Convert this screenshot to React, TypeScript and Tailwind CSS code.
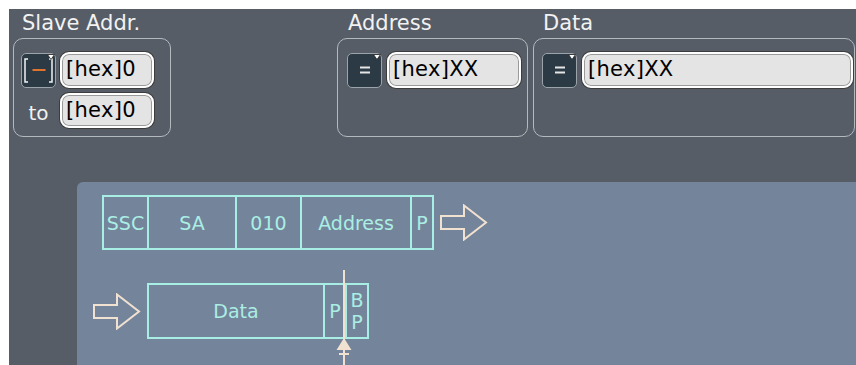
import type { ReactNode } from "react";

const sans = { fontFamily: '"DejaVu Sans", Verdana, sans-serif' };

function Corner() {
  return (
    <svg width="8" height="6" viewBox="0 0 8 6" className="absolute top-0 right-0">
      <path d="M0.5 0.5 H7.5 L4 5.5 Z" fill="#ffffff" stroke="#222" strokeWidth="0.8" />
    </svg>
  );
}

function OpButton({ kind }: { kind: "range" | "eq" }) {
  return (
    <div className="relative w-[35px] h-[35px] shrink-0 rounded-[5px] border border-[#9ca3aa] bg-[#2c3a45] flex items-center justify-center">
      {kind === "eq" ? (
        <svg width="12" height="10" viewBox="0 0 12 10">
          <rect x="1" y="1.5" width="10" height="2" fill="#e6e6e6" />
          <rect x="1" y="6.5" width="10" height="2" fill="#e6e6e6" />
        </svg>
      ) : (
        <svg width="33" height="33" viewBox="0 0 33 33">
          <path d="M6 5 H3 V28 H6" fill="none" stroke="#f2f2f2" strokeWidth="1.5" />
          <path d="M27 5 H30 V28 H27" fill="none" stroke="#f2f2f2" strokeWidth="1.5" />
          <path d="M10.5 16 H23.5" stroke="#e0742c" strokeWidth="2" />
        </svg>
      )}
      <Corner />
    </div>
  );
}

function HexInput({ value, width, height = 36 }: { value: string; width: number; height?: number }) {
  return (
    <div
      className="flex items-center rounded-[9px] border-2 border-white bg-[#e4e4e4] pl-[4px] text-[21px] tracking-[0.3px] text-black shadow-[0_0_0_1px_#3c3c3c,inset_0_0_0_1px_#9a9a9a]"
      style={{ ...sans, width, height }}
    >
      {value}
    </div>
  );
}

function Group({ label, width, labelPad, children }: { label: string; width: number; labelPad: number; children: ReactNode }) {
  return (
    <div style={{ width }} className="shrink-0">
      <div className="h-[29px] pt-[1px] text-[21px] leading-[26px] text-[#f2f2f2]" style={{ ...sans, paddingLeft: labelPad }}>
        {label}
      </div>
      <div className="h-[99px] rounded-[10px] border border-[#b4b9be] pt-[13px]">{children}</div>
    </div>
  );
}

function Cell({ w, children, last }: { w: number; children: ReactNode; last?: boolean }) {
  return (
    <div
      className={`flex flex-col items-center justify-center leading-[22px] ${last ? "" : "border-r-2 border-[#a8eee4]"}`}
      style={{ width: w }}
    >
      {children}
    </div>
  );
}

function Arrow() {
  return (
    <svg width="48" height="37" viewBox="0 0 48 37" className="shrink-0">
      <path d="M1 12 H24 V1.5 L46 18.5 L24 35.5 V25 H1 Z" fill="none" stroke="#f1e1d0" strokeWidth="2" />
    </svg>
  );
}

export default function App() {
  return (
    <div className="w-[856px] h-[365px] overflow-hidden bg-white pl-[9px] pt-[9px]">
      <div className="h-full bg-[#565d66] flex flex-col">
        <div className="flex items-start">
          <div className="ml-[4px]">
            <Group label="Slave Addr." width={158} labelPad={9}>
              <div className="grid grid-cols-[35px_94px] gap-x-[4px] gap-y-[5px] pl-[7px] items-center">
                <OpButton kind="range" />
                <HexInput value="[hex]0" width={94} />
                <div className="text-[20px] text-[#f2f2f2] text-center pt-[4px]" style={sans}>
                  to
                </div>
                <HexInput value="[hex]0" width={94} height={35} />
              </div>
            </Group>
          </div>
          <div className="ml-[166px]">
            <Group label="Address" width={191} labelPad={11}>
              <div className="flex items-center gap-[5px] pl-[9px]">
                <OpButton kind="eq" />
                <HexInput value="[hex]XX" width={134} />
              </div>
            </Group>
          </div>
          <div className="ml-[5px]">
            <Group label="Data" width={322} labelPad={10}>
              <div className="flex items-center gap-[5px] pl-[8px]">
                <OpButton kind="eq" />
                <HexInput value="[hex]XX" width={271} />
              </div>
            </Group>
          </div>
        </div>

        <div
          className="relative mt-[45px] ml-[68px] flex-1 rounded-tl-[6px] bg-[#74849b] pl-[16px] pt-[13px] text-[19px] text-[#aaeee4]"
          style={sans}
        >
          <div className="ml-[9px] flex items-center gap-[6px]">
            <div className="flex h-[55px] border-y-2 border-l-2 border-[#a8eee4]">
              <Cell w={45}>SSC</Cell>
              <Cell w={88}>SA</Cell>
              <Cell w={65}>010</Cell>
              <Cell w={110}>Address</Cell>
              <Cell w={22}>P</Cell>
            </div>
            <Arrow />
          </div>

          <div className="mt-[33px] flex items-center gap-[6px]">
            <Arrow />
            <div className="flex h-[56px] border-2 border-[#a8eee4]">
              <Cell w={176}>Data</Cell>
              <Cell w={22}>P</Cell>
              <Cell w={20} last>
                <span>B</span>
                <span>P</span>
              </Cell>
            </div>
          </div>

          <svg width="20" height="100" viewBox="0 0 20 100" className="absolute left-[257px] top-[88px]">
            <path d="M10 0 V100" stroke="#f1e1d0" strokeWidth="2" />
            <path d="M10 68 L17.5 80 H2.5 Z" fill="#f1e1d0" />
            <path d="M5 84 H15" stroke="#f1e1d0" strokeWidth="2" />
          </svg>
        </div>
      </div>
    </div>
  );
}
